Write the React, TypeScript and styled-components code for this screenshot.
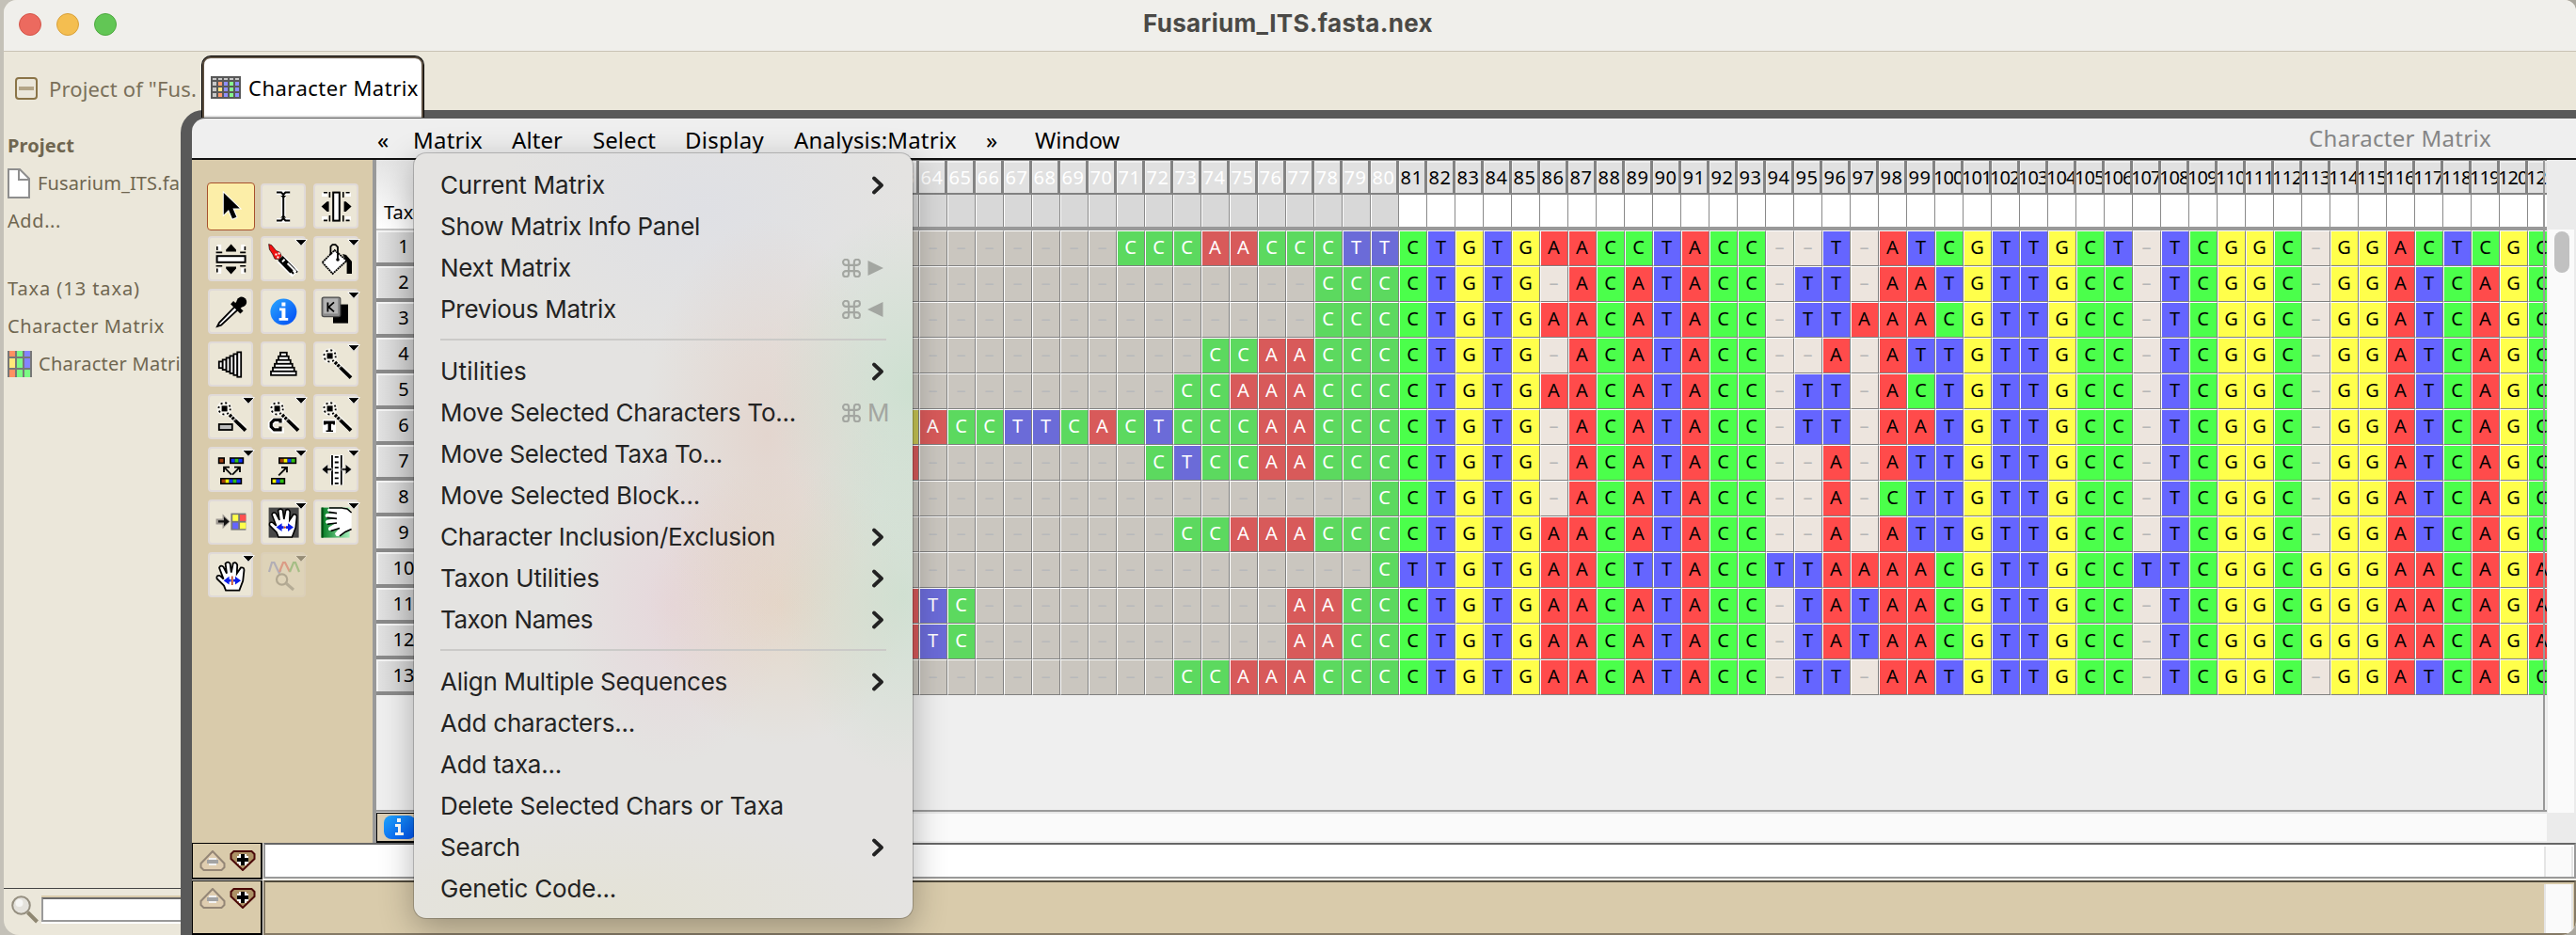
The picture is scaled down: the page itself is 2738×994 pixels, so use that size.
import React, { useLayoutEffect, useRef, useState } from "react";
import styled, { createGlobalStyle, css } from "styled-components";

const lucida = `"Noto Sans", "Open Sans", "DejaVu Sans", sans-serif`;
const system = `Inter, "Noto Sans", "Liberation Sans", sans-serif`;

const Global = createGlobalStyle`
  * { box-sizing: border-box; }
  body { margin: 0; background: #bcb9b2; font-family: ${lucida}; overflow: hidden; }
  svg { flex: none; }
`;

/* ---------- text that is tracked to a fixed width ---------- */

const FitText = styled.span`
  display: inline-block;
  white-space: pre;
`;

function Fit({ w, children }: { w: number; children: string }) {
  const ref = useRef<HTMLSpanElement>(null);
  const [spacing, setSpacing] = useState(0);
  useLayoutEffect(() => {
    const el = ref.current;
    if (!el) return;
    const natural = el.getBoundingClientRect().width - spacing * children.length;
    setSpacing((w - natural) / children.length);
  }, [w, children]);
  return (
    <FitText ref={ref} style={{ letterSpacing: spacing }}>
      {children}
    </FitText>
  );
}

/* ---------- window ---------- */

const Desktop = styled.div`
  width: 2738px;
  height: 994px;
  padding-left: 4px;
  background: linear-gradient(90deg, #c4c1b8, #a9a69d);
  overflow: hidden;
`;

const WindowFrame = styled.div`
  position: relative;
  height: 994px;
  background: #ebe7da;
  border-radius: 14px 12px 16px 16px;
  overflow: hidden;
`;

const TitleBar = styled.div`
  height: 55px;
  display: flex;
  align-items: center;
  padding-left: 16px;
  gap: 16px;
  padding-bottom: 3px;
  background: #f0efeb;
  border-bottom: 1px solid #c9c3b4;
`;

const Light = styled.span<{ $fill: string; $edge: string }>`
  width: 24px;
  height: 24px;
  border-radius: 50%;
  background: ${(p) => p.$fill};
  border: 1px solid ${(p) => p.$edge};
`;

const Title = styled.div`
  flex: 1;
  padding: 0 0 1px 1075px;
  font: 700 26px/40px ${system};
  color: #4a4946;
`;

/* ---------- tab strip ---------- */

const TabStrip = styled.div`
  display: flex;
  height: 62px;
`;

const ProjectTab = styled.div`
  width: 210px;
  display: flex;
  align-items: center;
  padding: 15px 0 0 12px;
  height: 62px;
  gap: 12px;
  font-size: 22px;
  line-height: 30px;
  color: #7a705a;
`;

const MatrixTab = styled.div`
  position: relative;
  z-index: 2;
  display: flex;
  align-items: center;
  gap: 8px;
  width: 237px;
  height: 66px;
  margin-top: 4px;
  padding: 1px 0 0 9px;
  background: #fff;
  border: solid #000;
  border-width: 1px 1px 0;
  box-shadow: inset 0 2px 0 #5e5142, inset 2px 0 0 #5e5142, inset -2px 0 0 #5e5142, inset 0 -2px 0 #d9d9d9;
  border-radius: 10px 10px 0 0;
  font-size: 22px;
  line-height: 30px;
  color: #000;
`;

const Body = styled.div`
  display: flex;
  height: 877px;
`;

/* ---------- sidebar ---------- */

const Sidebar = styled.div`
  width: 188px;
  display: flex;
  flex-direction: column;
  overflow: hidden;
  color: #6f6650;
`;

const SideList = styled.div`
  height: 827px;
  padding-top: 18px;
`;

const SideRow = styled.div<{ $bold?: boolean; $gap?: number }>`
  display: flex;
  align-items: center;
  gap: 7px;
  height: 40px;
  margin-top: ${(p) => p.$gap ?? 0}px;
  padding-left: 4px;
  font-size: 20px;
  line-height: 40px;
  font-weight: ${(p) => (p.$bold ? 700 : 400)};
  white-space: nowrap;
`;

const SearchRow = styled.div`
  display: flex;
  height: 50px;
  border-top: 1px solid #444;
  padding: 7px 0 0 7px;
  gap: 1px;
`;

const SearchField = styled.div`
  width: 160px;
  flex: none;
  background: #fff;
  border: 2px solid #999;
  border-top: 2px solid #6b6b6b;
  box-shadow: 0 -2px 0 #d9cbab, 0 2px 0 #fff;
  height: 26px;
  margin-top: 2px;
`;

/* ---------- editor frame ---------- */

const Frame = styled.div`
  width: 2546px;
  background: #595959;
  border-radius: 24px 0 0 0;
  padding: 9px 0 0 12px;
`;

const Inner = styled.div`
  height: 868px;
  border-radius: 14px 0 0 0;
  background: #efefef;
  overflow: hidden;
`;

const MenuBar = styled.div`
  display: flex;
  height: 44px;
  padding: 4px 90px 0 197px;
  border-bottom: 2px solid #111;
  font-size: 24px;
  line-height: 38px;
  color: #000;
`;

const MenuTitle = styled.div<{ $slot: number }>`
  width: ${(p) => p.$slot}px;
  white-space: nowrap;
`;

const PanelTitle = styled.div`
  margin: -2px 0 0 auto;
  color: #858585;
`;

const Workspace = styled.div`
  display: flex;
  height: 726px;
`;

const Palette = styled.div`
  width: 196px;
  background: #d9cbab;
  border-right: 4px solid #999;
  display: grid;
  grid-template-columns: repeat(3, 48px);
  grid-auto-rows: 48px;
  gap: 8px;
  padding: 25px 0 0 17px;
`;

const Tool = styled.div<{ $on?: boolean; $off?: boolean }>`
  position: relative;
  width: 48px;
  height: 48px;
  border-radius: 4px;
  background: #ebe6d6;
  border: 2px solid #e0dad8;
  ${(p) =>
    p.$on &&
    css`
      width: 51px;
      height: 51px;
      margin: -1px;
      background: #fceea8;
      border: 1px solid #a7502c;
    `}
  ${(p) =>
    p.$off &&
    css`
      opacity: 0.3;
    `}
  svg {
    position: absolute;
    left: -2px;
    top: -2px;
    overflow: visible;
  }
`;

/* ---------- matrix ---------- */

const MatrixColumn = styled.div`
  width: 2307px;
  display: flex;
  flex-direction: column;
`;

const MatrixView = styled.div`
  position: relative;
  height: 693px;
  overflow: hidden;
  background: #efefef;
  border-bottom: 2px solid #999;
  &::after {
    content: "";
    position: absolute;
    right: 2px;
    top: 0;
    width: 2px;
    height: 100%;
    background: #999;
  }
`;

const Line = styled.div<{ $h: number }>`
  display: flex;
  height: ${(p) => p.$h}px;
`;

const HeadBlock = styled.div`
  display: flex;
  height: 75px;
`;

const TaxonHead = styled.div`
  flex: none;
  width: 547px;
  padding: 41px 0 0 8px;
  background: linear-gradient(#e4e4e4, #fff);
  border-bottom: 2px solid #c4c4c4;
  font-size: 20px;
  line-height: 30px;
`;

const HeadCell = styled.div<{ $dim: boolean; $long: boolean }>`
  flex: none;
  width: 30px;
  height: 37px;
  display: flex;
  justify-content: ${(p) => (p.$long ? "flex-start" : "center")};
  text-indent: ${(p) => (p.$long ? "-2px" : "0")};
  overflow: hidden;
  font-size: 20px;
  line-height: 36px;
  letter-spacing: ${(p) => (p.$long ? "-0.9px" : "0.6px")};
  color: ${(p) => (p.$dim ? "#fff" : "#000")};
  background: #e1e1e1;
  border: solid #828282;
  border-width: 1px 3px 2px 0;
  box-shadow: inset 1px 2px 0 #efefef;
`;

const SubCell = styled.div<{ $dim: boolean }>`
  flex: none;
  width: 30px;
  height: 34px;
  background: ${(p) => (p.$dim ? "#d8d8d8" : "#fff")};
  border-right: 1px solid #8a8a8a;
  border-left: 1px solid #fff;
`;

const Divider = styled.div`
  height: 4px;
  background: #999;
`;

const RowHead = styled.div`
  flex: none;
  width: 547px;
  height: 38px;
  padding-left: 1px;
  background: linear-gradient(90deg, #e2e2e2, #cfcfcf 40px);
  border-bottom: 4px solid #8a8a8a;
  box-shadow: inset 2px 2px 0 #f4f4f4;
  font-size: 20px;
  line-height: 33px;
  div {
    width: 56px;
    text-align: center;
  }
`;

const fills: Record<string, string> = { C: "#4bff4b", T: "#6565ff", G: "#ffff4b", A: "#ff4b4b", "-": "#ede5de" };
const dimFills: Record<string, string> = { C: "#5cd95f", T: "#6b6bd8", G: "#c9c754", A: "#d85a5a", "-": "#cac6bf" };

const Cell = styled.div<{ $base: string; $dim: boolean }>`
  flex: none;
  width: 30px;
  height: 38px;
  background: ${(p) => (p.$dim ? dimFills : fills)[p.$base]};
  border: 1px solid #fff;
  border-right-color: #808080;
  border-bottom-color: #808080;
  text-align: center;
  font-size: 20px;
  line-height: 33px;
  padding-right: 1px;
  color: ${(p) => (p.$base === "-" ? (p.$dim ? "#b8b9bb" : "#b6b6b6") : p.$dim ? "#fff" : "#000")};
`;

const FooterBar = styled.div`
  display: flex;
  height: 33px;
  background: #fafafa;
  border-top: 2px solid #e6e6e6;
  border-bottom: 2px solid #eee;
`;

const InfoBox = styled.div`
  width: 60px;
  height: 32px;
  margin-top: -1px;
  padding: 2px 0 0 7px;
  background: #dccfb6;
  border: solid #000;
  border-width: 1px 1px 2px 1px;
`;

const ScrollColumn = styled.div`
  width: 31px;
  background: #ebebeb;
  padding: 74px 2px 32px 1px;
  display: flex;
`;

const ScrollTrack = styled.div`
  flex: 1;
  background: #fafafa;
  padding: 2px 0 0 7px;
`;

const Thumb = styled.div`
  width: 16px;
  height: 44px;
  border-radius: 8px;
  background: #c1c1c1;
`;

/* ---------- bottom panels ---------- */

const Panel = styled.div<{ $h: number }>`
  display: flex;
  height: ${(p) => p.$h}px;
  gap: 1px;
  background: #f6f2ea;
`;

const PanelButtons = styled.div<{ $h: number }>`
  display: flex;
  gap: 4px;
  width: 75px;
  height: ${(p) => p.$h}px;
  padding: 7px 0 0 7px;
  background: #d9cbab;
  border: solid #000;
  border-width: 1px 2px 2px 1px;
`;

const PanelField = styled.div<{ $tan?: boolean; $h: number }>`
  flex: 1;
  display: flex;
  justify-content: flex-end;
  height: ${(p) => p.$h}px;
  background: ${(p) => (p.$tan ? "#d9cbab" : "#fff")};
  border: 2px solid ${(p) => (p.$tan ? "#857a66" : "#999")};
  border-top-color: ${(p) => (p.$tan ? "#504a3c" : "#666")};
`;

const PanelTrack = styled.div`
  width: 31px;
  margin: 2px 1px 0 0;
  background: #fafafa;
  border: solid #e5e5e5;
  border-width: 0 2px;
`;

/* ---------- popup menu ---------- */

const Popup = styled.div`
  position: absolute;
  z-index: 5;
  left: 436px;
  top: 163px;
  width: 530px;
  height: 813px;
  padding: 12px 0 0;
  border-radius: 13px;
  box-shadow: 0 0 0 1px rgba(0, 0, 0, 0.2), 0 10px 36px rgba(0, 0, 0, 0.3);
  background:
    radial-gradient(150px 190px at 530px 250px, rgba(190, 222, 197, 0.6), transparent),
    radial-gradient(130px 190px at 520px 470px, rgba(195, 222, 200, 0.6), transparent),
    radial-gradient(130px 230px at 375px 300px, rgba(226, 200, 188, 0.5), transparent),
    radial-gradient(140px 150px at 390px 480px, rgba(228, 204, 178, 0.5), transparent),
    radial-gradient(120px 170px at 275px 480px, rgba(232, 205, 214, 0.55), transparent),
    radial-gradient(220px 160px at 310px 60px, rgba(218, 221, 232, 0.5), transparent),
    radial-gradient(330px 110px at 200px 813px, rgba(228, 226, 208, 0.7), transparent),
    #e4e3e1;
  font: 400 26px/44px ${system};
  color: #232323;
`;

const Item = styled.div`
  display: flex;
  align-items: center;
  justify-content: space-between;
  height: 44px;
  padding: 0 28px 0 28px;
`;

const Rule = styled.div`
  height: 22px;
  margin: 0 28px;
  display: flex;
  align-items: center;
  &::after {
    content: "";
    flex: 1;
    height: 2px;
    margin-top: -3px;
    background: #cbcac8;
  }
`;

const Shortcut = styled.span`
  display: flex;
  align-items: center;
  color: #a3a6a1;
  width: 47px;
  gap: 7px;
  white-space: nowrap;
`;

/* ---------- small drawings ---------- */

const Chevron = () => (
  <svg width="14" height="20" viewBox="0 0 14 20" style={{ marginRight: 2 }}>
    <path d="M3 2.5 L11 10 L3 17.5" fill="none" stroke="#222" strokeWidth="3.8" strokeLinecap="round" strokeLinejoin="round" />
  </svg>
);

const Command = () => (
  <svg width="20" height="20" viewBox="1.500 1.500 21 21" fill="none" stroke="#a3a6a1" strokeWidth="2.200">
    <path d="M15 5.500v13a3.200 3.200 0 1 0 3.200-3.200H5.800A3.200 3.200 0 1 0 9 18.500V5.500A3.200 3.200 0 1 0 5.800 8.700h12.400A3.200 3.200 0 1 0 15 5.500z" />
  </svg>
);

const TriRight = () => (
  <svg width="20" height="20" viewBox="0 0 20 20">
    <path d="M0.500 2 L17 10 L0.500 18z" fill="#a3a6a1" />
  </svg>
);

const TriLeft = () => (
  <svg width="20" height="20" viewBox="0 0 20 20">
    <path d="M16.500 2 L0 10 L16.500 18z" fill="#a3a6a1" />
  </svg>
);

const Collapse = () => (
  <svg width="24" height="24" viewBox="0 0 24 24">
    <rect x="1" y="1" width="22" height="22" rx="3" fill="none" stroke="#8a7447" strokeWidth="2" />
    <rect x="4" y="10" width="16" height="4" fill="#b3a587" />
  </svg>
);

const TabIcon = () => {
  const cols = ["#ff9a6e", "#8f8fff", "#86f98f", "#8f8fff"];
  return (
    <svg width="32" height="24" viewBox="0 0 32 24" shapeRendering="crispEdges">
      <rect width="32" height="24" fill="#595959" />
      {[0, 1, 2, 3].map((r) =>
        [0, 1, 2, 3, 4].map((c) => (
          <rect
            key={`${r}-${c}`}
            x={2 + c * 6}
            y={r === 0 ? 2 : r * 6}
            width="4"
            height={r === 0 ? 2 : 4}
            fill={r === 0 || c === 0 ? "#c9c9c9" : r === 2 && c === 1 ? "#ffe680" : cols[c - 1]}
          />
        )),
      )}
    </svg>
  );
};

const MatrixIcon = () => {
  const cells = ["#ff9163", "#7bfb84", "#8484ff", "#ffe97a", "#7bfb84", "#8484ff", "#ff9163", "#7bfb84", "#7bfb84"];
  return (
    <svg width="26" height="28" viewBox="0 0 26 28" shapeRendering="crispEdges">
      <rect width="26" height="28" fill="#777" />
      {cells.map((f, i) => (
        <rect key={i} x={2 + (i % 3) * 8} y={[0, 8, 20][Math.floor(i / 3)]} width="6" height={[6, 10, 8][Math.floor(i / 3)]} fill={f} />
      ))}
    </svg>
  );
};

const DocIcon = () => (
  <svg width="25" height="32" viewBox="0 0 25 32">
    <path d="M1 1h12l10 10v20H1z" fill="#fff" stroke="#8e8e8e" strokeWidth="2" />
    <path d="M12 1v11h11" fill="none" stroke="#8e8e8e" strokeWidth="2" />
  </svg>
);

const Glass = () => (
  <svg width="32" height="31" viewBox="0 0 32 31">
    <circle cx="11.500" cy="10.500" r="9.300" fill="#e4e2dc" stroke="#958f80" strokeWidth="2" />
    <circle cx="9.500" cy="8" r="4" fill="#f6f6f4" />
    <path d="M18.500 18l10 10" stroke="#8f8772" strokeWidth="4" />
  </svg>
);

const MinusTri = () => (
  <svg width="28" height="22" viewBox="0 0 28 22">
    <path d="M14 1L1.500 14v4l3 3h19l3-3v-4z" fill="#dfcdb0" stroke="#948676" strokeWidth="2" />
    <path d="M10 8h8v8h-8z" fill="#f1f1f1" />
    <path d="M8 10h12v4H8z" fill="#a3a3a3" />
  </svg>
);

const PlusTri = () => (
  <svg width="28" height="22" viewBox="0 0 28 22">
    <path d="M4.500 1h19l3 3v5L14 21 1.500 9V4z" fill="#ad9266" stroke="#4a0808" strokeWidth="2" />
    <path d="M10 4h8v12h-8z M8 6h12v8H8z" fill="#fff" />
    <path d="M12 4h4v12h-4z M8 8h12v4H8z" fill="#000" />
  </svg>
);

const InfoOval = () => (
  <svg width="34" height="26" viewBox="0 0 34 26">
    <defs>
      <linearGradient id="oval" x1="0" y1="0" x2="1" y2="1">
        <stop offset="0" stopColor="#1fa6ff" />
        <stop offset="1" stopColor="#0050f0" />
      </linearGradient>
    </defs>
    <rect x="0" y="0" width="34" height="25" rx="8" fill="url(#oval)" />
    <path d="M14 3h4v4h-4z M12 9h6v9h3v3h-9v-3h3v-6h-3z" fill="#fff" />
  </svg>
);

/* ---------- tool icons, on a 24 x 24 grid ---------- */

const Flag = () => <path d="M18.300 1.800h6.400l-3.200 3.400z" fill="#000" stroke="#fff" strokeWidth="0.500" />;

const Wand = () => (
  <g>
    <g stroke="#fff" strokeWidth="3" opacity="0.600">
      <path d="M12 11.500L19.500 18.500" />
      <circle cx="8.800" cy="7.700" r="2.600" fill="#fff" />
    </g>
    <rect x="7.300" y="6.200" width="3" height="3" fill="#000" />
    <circle cx="8.800" cy="7.700" r="3.100" fill="none" stroke="#000" strokeWidth="0.900" strokeDasharray="1 1.430" />
    <path d="M11.500 11L14.500 14" stroke="#000" strokeWidth="1.700" strokeDasharray="1.400 0.500" />
    <path d="M14.500 14L20 19.300" stroke="#000" strokeWidth="1.900" />
  </g>
);

const handPath =
  "M9.500 20L8.500 17.500L4.800 13.800Q4.300 11.700 6.500 12.300L8.300 14L6 8Q6.700 6.300 8.200 7.500L10 11L9.300 5.800Q10.600 4.300 11.800 5.800L12.400 10.500L13.400 5.600Q15 4.700 15.600 6.500L15.400 11L17.500 7.900Q19.400 7.600 19.200 9.500L18.600 15L16.700 20Z";

const HandArrows = () => (
  <g>
    <path d="M8.300 14.800l3-2.200v1.500h1v1.400h-1v1.500z M17.500 14.800l-3-2.200v1.500h-1v1.400h1v1.500z" fill="#0a1ee8" />
  </g>
);

const Strip = ({ x, y, colors }: { x: number; y: number; colors: string[] }) => (
  <g>
    <rect x={x} y={y} width={colors.length * 2 + 1.6} height="3.500" fill="#000" />
    {colors.map((c, i) => (
      <rect key={i} x={x + 0.8 + i * 2} y={y + 0.8} width="2" height="1.900" fill={c} />
    ))}
  </g>
);

const Spread = ({ turn }: { turn?: boolean }) => (
  <g transform={turn ? "rotate(90 12.300 12.300)" : undefined}>
    <path
      d="M4.500 5h3v2h-3z M4.500 17.500h3v2h-3z M17 5h3v2h-3z M17 17.500h3v2h-3z"
      fill="#fff"
    />
    <rect x="10.600" y="4.800" width="3.300" height="15" fill="#fff" stroke="#000" strokeWidth="1" />
    <path
      d="M4.300 12.300l3-2.700h1v5.400h-1z M20.300 12.300l-3-2.700h-1v5.400h1z M8.300 4.500h.8v3h-.8z M8.300 17h.8v3.300h-.8z M15.500 4.500h.8v3h-.8z M15.500 17h.8v3.300h-.8z M5.500 4.500h2v.8h-2z M5.500 19.300h2v.8h-2z M17.300 4.500h2v.8h-2z M17.300 19.300h2v.8h-2z"
      fill="#000"
    />
  </g>
);

const B = "#a03c0c";
const Y = "#f4f400";
const U = "#1030ff";
const N = "#30c010";

const icons: React.ReactNode[] = [
  <path d="M8.800 5.600v11.600l2.600-2.600 2 4.800 2.200-.900-2-4.700h3.700z" fill="#000" stroke="#fff" strokeWidth="1" paintOrder="stroke" transform="translate(.6 .4)" />,
  <g>
    <path d="M8.500 4.800h7M8.500 19.700h7M12.100 5v14.500" stroke="#fff" strokeWidth="2.400" />
    <path d="M8.500 4.800h2.500l1.100 1.200 1.100-1.200h2.400M8.500 19.700h2.500l1.100-1.200 1.100 1.200h2.400M12.100 5.500v13.500" stroke="#000" strokeWidth="1" fill="none" />
    <path d="M10.600 6.500h3l-1.500 1.500z M10.600 18.200h3l-1.500-1.500z" fill="#000" />
  </g>,
  <Spread />,
  <Spread turn />,
  <g>
    <path d="M10.500 12L18.500 20" stroke="#fff" strokeWidth="5" />
    <path d="M4.300 4.300l1.500.5 2.500 3 2 .8 .8 2-1.300 1.800-2.300-.3-1.200-2.600-1.600-2.400z" fill="#f01010" stroke="#000" strokeWidth=".3" />
    <path d="M7.700 9.300h1v1h-1z M9.300 8.800h1v1h-1z M8.700 10.700h1v1h-1z" fill="#fff" />
    <path d="M10.500 11.700L17 18.500" stroke="#000" strokeWidth="3.600" />
    <path d="M11.500 11.800L19.500 19.300M14 16L17.500 20" stroke="#000" strokeWidth="1" />
    <path d="M11.500 13.700l1.300-1.300 M14.300 14.500l4.500 4.500" stroke="#fff" strokeWidth="1" />
    <Flag />
  </g>,
  <g>
    <path d="M15.500 9.500l2 .5 3 3.500v6.500h-2.700v-6z" fill="#000" />
    <path d="M4.800 14l6.500-6.500 6.500 5.500-7.500 7z" fill="#fff" stroke="#000" strokeWidth=".9" strokeDasharray="1 .3" />
    <path d="M9.200 10V5.600l1-1h1.600l1.200 1.200v6.500" fill="none" stroke="#000" strokeWidth=".9" />
    <circle cx="13" cy="12.500" r=".9" fill="#000" />
    <Flag />
  </g>,
  <g>
    <path d="M14.500 9.300L6 18l-1 2 2-.7L16 11z" fill="#fff" stroke="#000" strokeWidth=".9" />
    <path d="M12.800 7.300L18 12.500" stroke="#000" strokeWidth="2.200" />
    <path d="M15 9.800L18 7" stroke="#000" strokeWidth="4" />
    <circle cx="17.900" cy="7" r="2.700" fill="#000" />
  </g>,
  <g>
    <defs>
      <linearGradient id="info" x1="0" y1="0" x2="1" y2="1">
        <stop offset="0" stopColor="#2aa8ff" />
        <stop offset="1" stopColor="#0048f4" />
      </linearGradient>
    </defs>
    <circle cx="12.200" cy="12.300" r="7" fill="url(#info)" />
    <path d="M11.200 7.300h2v2h-2z M10 10.200h3.200v5.300h1.400v1.400H9.800v-1.400h1.400v-3.900H10z" fill="#fff" />
  </g>,
  <g>
    <rect x="10.500" y="8.300" width="8" height="10" fill="#000" />
    <rect x="4.600" y="4.600" width="9.800" height="10.200" rx="1" fill="#8b8b8b" stroke="#4c4c4c" strokeWidth=".6" />
    <rect x="5.600" y="5.200" width="7.400" height="8" fill="#b4b4b4" />
    <path d="M7.700 7.200v5M11 7.200l-2.800 2.500 2.800 2.500" stroke="#000" strokeWidth=".9" fill="none" />
    <Flag />
  </g>,
  <g fill="#fff" stroke="#000" strokeWidth=".9">
    {[0, 1, 2, 3, 4, 5].map((i) => (
      <rect key={i} x={5.9 + i * 1.95} y={10.7 - i} width="1.950" height={3.4 + i * 1.95} />
    ))}
  </g>,
  <g fill="#fff" stroke="#000" strokeWidth=".9">
    {[0, 1, 2, 3, 4, 5].map((i) => (
      <rect key={i} x={10.5 - i} y={5.9 + i * 2} width={3.4 + i * 1.99} height="2" />
    ))}
  </g>,
  <g>
    <Wand />
    <Flag />
  </g>,
  <g>
    <Wand />
    <rect x="5.900" y="16" width="7" height="3" fill="#bdbdbd" stroke="#000" strokeWidth=".9" />
    <Flag />
  </g>,
  <g>
    <Wand />
    <path d="M11 15.300v-1.300H7l-1.600 1.600v2l1.600 1.600h4v-1.300" fill="none" stroke="#fff" strokeWidth="3" />
    <path d="M10.500 15.300v-1.600H7.200l-1.600 1.600v2l1.600 1.600h3.300v-1.600" fill="none" stroke="#000" strokeWidth="1.600" />
    <Flag />
  </g>,
  <g>
    <Wand />
    <path d="M5 13.500h7v7H5z" fill="#fff" />
    <path d="M5.500 14.300h6v2h-1v-.4h-1v3.300h1v.8H6.800v-.8h1v-3.300h-1v.4H5.500z" fill="#000" />
    <Flag />
  </g>,
  <g>
    <Strip x={5.4} y={5.6} colors={[B]} />
    <Strip x={11.5} y={5.6} colors={[U, N, U]} />
    <Strip x={6.5} y={16.5} colors={[B, Y, U, N, U]} />
    <path d="M12.500 14.800L9 11.300M8.500 13.500v-2.700h3M13 14.800l3.800-3.800M14 10.800h3v2.700" stroke="#000" strokeWidth=".9" fill="none" />
    <Flag />
  </g>,
  <g>
    <Strip x={9.5} y={5.6} colors={[B, Y, U, N]} />
    <Strip x={5.5} y={16.5} colors={[Y, U, N]} />
    <path d="M9.600 15.200l4.200-4.200M11 10.900h3v2.700" stroke="#000" strokeWidth=".9" fill="none" />
    <Flag />
  </g>,
  <g>
    <rect x="9" y="4.300" width="7" height="16" fill="#fff" />
    <path d="M10 4.500v15.800M14.900 4.500v15.800" stroke="#000" strokeWidth=".9" />
    <path d="M12.400 5v15" stroke="#000" strokeWidth="2" strokeDasharray=".9 1.900" />
    <path d="M4.500 12l3.300-2.800v2.200H10v1.200H7.800v2.200z M20.400 12l-3.300-2.800v2.200H15v1.200h2.100v2.200z" fill="#000" stroke="#fff" strokeWidth=".3" />
    <Flag />
  </g>,
  <g>
    <path d="M4.300 10.200h3.500V7.800l4 3.900-4 3.900v-2.400H4.300z" fill="#9b9690" />
    <path d="M5.500 11.100h3V9.300l2.800 2.400-2.800 2.400v-1.800h-3z" fill="#111" />
    <rect x="12.200" y="7.300" width="8" height="9" fill="#777" />
    <rect x="13.100" y="8.100" width="3" height="3.300" fill="#ffff4b" />
    <rect x="17" y="8.100" width="3.200" height="3.300" fill="#ff5050" />
    <rect x="13.100" y="12.300" width="3" height="3.300" fill="#6565ff" />
    <rect x="17" y="12.300" width="3.200" height="3.300" fill="#ffff4b" />
  </g>,
  <g>
    <rect x="4.300" y="4.300" width="16" height="16" fill="#474747" />
    <path d={handPath} fill="#fff" stroke="#000" strokeWidth=".8" />
    <HandArrows />
    <circle cx="12.900" cy="14.800" r=".6" fill="#c0401a" />
    <Flag />
  </g>,
  <g>
    <defs>
      <linearGradient id="green">
        <stop offset="0" stopColor="#00791f" />
        <stop offset="1" stopColor="#a6f0bc" />
      </linearGradient>
    </defs>
    <rect x="4.300" y="4.300" width="15" height="16" fill="url(#green)" />
    <rect x="4.300" y="4.300" width="1" height="16" fill="#004d14" />
    <path
      d="M20.300 7L18 5L15.500 4.600L8.500 4.600Q6.600 5.500 8.300 6.500L12 7.200L7 7.500Q5.500 8.700 7.200 9.700L12 10L7 11Q5.800 12.300 7.500 13L12 12.500L8.300 14.700Q7.300 16.500 9.300 16.500L14 15.300L11.500 18Q12 20.300 14 19.200L17 17L20.300 15.500Z"
      fill="#fff"
    />
    <path
      d="M15.500 4.500L8.500 4.500M8.300 6.700L12.500 7.300M7.200 9.700L12.500 10.200M7.500 13.100L12.500 12.500M9.300 16.700L14 15.300M14 19.400L17 17.200L20.300 15.700M20.300 7L18 5L15.500 4.600"
      fill="none"
      stroke="#000"
      strokeWidth=".8"
    />
    <Flag />
  </g>,
  <g transform="translate(0 .3)">
    <path d={handPath} fill="#fff" stroke="#000" strokeWidth=".9" />
    <HandArrows />
    <path d="M12.900 12.500v4.700" stroke="#c0401a" strokeWidth=".8" />
    <g transform="translate(0 -.3)">
      <Flag />
    </g>
  </g>,
  <g fill="none" strokeWidth="1.100">
    <path d="M4.500 10.500l1.500-5h1.200l2.600 5.500 1-1.500" stroke="#5a6cd0" />
    <path d="M10 10.500l2-5h1l2.500 5" stroke="#e03030" />
    <path d="M15.500 10.500l2-5h1l2 5" stroke="#30a030" />
    <circle cx="11.300" cy="14.500" r="2.800" stroke="#555" />
    <path d="M13.500 16.500l4 3.500" stroke="#666" strokeWidth="1.500" />
    <Flag />
  </g>,
];

/* ---------- data ---------- */

const FIRST = 63;
const EXCLUDED_TO = 80;
const gap = (n: number) => "-".repeat(n);
const tailA = "GTTGCC-TCGGC-GGATCAGC";
const tailB = "GTTGCC-TCGGCGGGAACAGA";

const sequences = [
  gap(8) + "CCCAACCCTT" + "CTGTGAACCTACC--T-ATC" + "GTTGCT-TCGGC-GGACTCGC",
  gap(15) + "CCC" + "CTGTG-ACATACC-TT-AAT" + tailA,
  gap(15) + "CCC" + "CTGTGAACATACC-TTAAAC" + tailA,
  gap(11) + "CCAACCC" + "CTGTG-ACATACC--A-ATT" + tailA,
  gap(10) + "CCAAACCC" + "CTGTGAACATACC-TT-ACT" + tailA,
  "GACCTTCACTCCCAACCC" + "CTGTG-ACATACC-TT-AAT" + tailA,
  "A" + gap(8) + "CTCCAACCC" + "CTGTG-ACATACC--A-ATT" + tailA,
  gap(17) + "C" + "CTGTG-ACATACC--A-CTT" + tailA,
  gap(10) + "CCAAACCC" + "CTGTGAACATACC--A-ATT" + tailA,
  gap(17) + "C" + "TTGTGAACTTACCTTAAAAC" + "GTTGCCTTCGGCGGGAACAGA",
  "ATC" + gap(11) + "AACC" + "CTGTGAACATACC-TATAAC" + tailB,
  "ATC" + gap(11) + "AACC" + "CTGTGAACATACC-TATAAC" + tailB,
  gap(10) + "CCAAACCC" + "CTGTGAACATACC-TT-AAT" + tailA,
];

const columns = Array.from({ length: 59 }, (_, i) => FIRST + i);

const barMenus: [string, number, number][] = [
  ["«", 12, 38],
  ["Matrix", 74, 105],
  ["Alter", 54, 86],
  ["Select", 67, 98],
  ["Display", 84, 116],
  ["Analysis:Matrix", 173, 204],
  ["»", 12, 52],
  ["Window", 90, 92],
];

type Entry = { label: string; w: number; more?: boolean; keys?: React.ReactNode } | null;

const entries: Entry[] = [
  { label: "Current Matrix", w: 175, more: true },
  { label: "Show Matrix Info Panel", w: 276 },
  { label: "Next Matrix", w: 139, keys: <TriRight /> },
  { label: "Previous Matrix", w: 187, keys: <TriLeft /> },
  null,
  { label: "Utilities", w: 92, more: true },
  { label: "Move Selected Characters To...", w: 378, keys: "M" },
  { label: "Move Selected Taxa To...", w: 300 },
  { label: "Move Selected Block...", w: 276 },
  { label: "Character Inclusion/Exclusion", w: 356, more: true },
  { label: "Taxon Utilities", w: 169, more: true },
  { label: "Taxon Names", w: 162, more: true },
  null,
  { label: "Align Multiple Sequences", w: 305, more: true },
  { label: "Add characters...", w: 207 },
  { label: "Add taxa...", w: 129 },
  { label: "Delete Selected Chars or Taxa", w: 365 },
  { label: "Search", w: 85, more: true },
  { label: "Genetic Code...", w: 187 },
];

export default function App() {
  return (
    <Desktop>
      <Global />
      <WindowFrame>
        <TitleBar>
          <Light $fill="#ec6a5f" $edge="#d35549" />
          <Light $fill="#f4be50" $edge="#d8a03a" />
          <Light $fill="#62c655" $edge="#4fa941" />
          <Title>
            <Fit w={308}>Fusarium_ITS.fasta.nex</Fit>
          </Title>
        </TitleBar>

        <TabStrip>
          <ProjectTab>
            <Collapse />
            <Fit w={157}>Project of "Fus.</Fit>
          </ProjectTab>
          <MatrixTab>
            <TabIcon />
            <Fit w={181}>Character Matrix</Fit>
          </MatrixTab>
        </TabStrip>

        <Body>
          <Sidebar>
            <SideList>
              <SideRow $bold><Fit w={71}>Project</Fit></SideRow>
              <SideRow><DocIcon /><Fit w={151}>Fusarium_ITS.fa</Fit></SideRow>
              <SideRow><Fit w={57}>Add...</Fit></SideRow>
              <SideRow $gap={32}><Fit w={141}>Taxa (13 taxa)</Fit></SideRow>
              <SideRow><Fit w={167}>Character Matrix</Fit></SideRow>
              <SideRow><MatrixIcon /><Fit w={151}>Character Matri</Fit></SideRow>
            </SideList>
            <SearchRow>
              <Glass />
              <SearchField />
            </SearchRow>
          </Sidebar>

          <Frame>
            <Inner>
              <MenuBar>
                {barMenus.map(([label, w, slot]) => (
                  <MenuTitle key={label} $slot={slot}>
                    <Fit w={w}>{label}</Fit>
                  </MenuTitle>
                ))}
                <PanelTitle>
                  <Fit w={194}>Character Matrix</Fit>
                </PanelTitle>
              </MenuBar>

              <Workspace>
                <Palette>
                  {icons.map((icon, i) => (
                    <Tool key={i} $on={i === 0} $off={i === icons.length - 1}>
                      <svg width="48" height="48" viewBox="0 0 24 24">{icon}</svg>
                    </Tool>
                  ))}
                </Palette>

                <MatrixColumn>
                  <MatrixView>
                    <HeadBlock>
                      <TaxonHead>Taxon</TaxonHead>
                      <div>
                        <Line $h={37}>
                          {columns.map((c) => (
                            <HeadCell key={c} $dim={c <= EXCLUDED_TO} $long={c > 99}>{c}</HeadCell>
                          ))}
                        </Line>
                        <Line $h={34}>
                          {columns.map((c) => (
                            <SubCell key={c} $dim={c <= EXCLUDED_TO} />
                          ))}
                        </Line>
                        <Divider />
                      </div>
                    </HeadBlock>
                    {sequences.map((seq, r) => (
                      <Line key={r} $h={38}>
                        <RowHead><div>{r + 1}</div></RowHead>
                        {seq.split("").map((b, i) => (
                          <Cell key={i} $base={b} $dim={FIRST + i <= EXCLUDED_TO}>
                            {b === "-" ? "–" : b}
                          </Cell>
                        ))}
                      </Line>
                    ))}
                  </MatrixView>
                  <FooterBar>
                    <InfoBox><InfoOval /></InfoBox>
                  </FooterBar>
                </MatrixColumn>

                <ScrollColumn>
                  <ScrollTrack><Thumb /></ScrollTrack>
                </ScrollColumn>
              </Workspace>

              <Panel $h={40}>
                <PanelButtons $h={39}><MinusTri /><PlusTri /></PanelButtons>
                <PanelField $h={38}><PanelTrack /></PanelField>
              </Panel>
              <Panel $h={58}>
                <PanelButtons $h={58}><MinusTri /><PlusTri /></PanelButtons>
                <PanelField $tan $h={58}><PanelTrack /></PanelField>
              </Panel>
            </Inner>
          </Frame>
        </Body>

        <Popup>
          {entries.map((e, i) =>
            e === null ? (
              <Rule key={i} />
            ) : (
              <Item key={i}>
                <Fit w={e.w}>{e.label}</Fit>
                {e.more && <Chevron />}
                {e.keys && (
                  <Shortcut>
                    <Command />
                    {e.keys}
                  </Shortcut>
                )}
              </Item>
            ),
          )}
        </Popup>
      </WindowFrame>
    </Desktop>
  );
}
